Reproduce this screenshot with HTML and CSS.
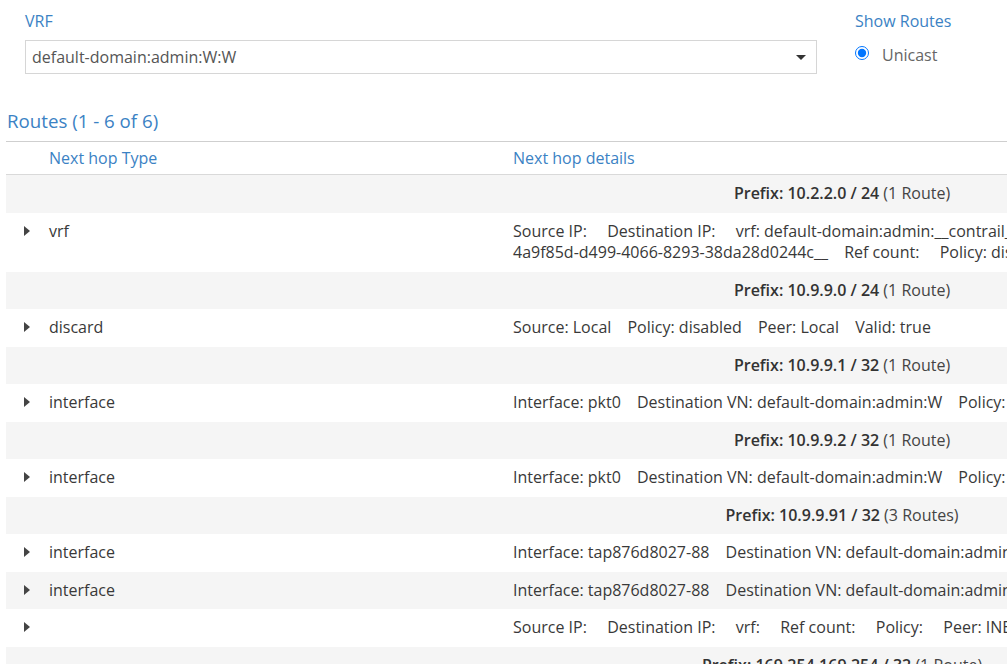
FILE: index.html
```html
<!DOCTYPE html>
<html>
<head>
<meta charset="utf-8">
<link rel="stylesheet" href="styles.css">
</head>
<body>
<div class="page">
  <div class="filters">
    <div class="field vrf">
      <div class="label">VRF</div>
      <div class="select">
        <span class="select-text">default-domain:admin:W:W</span>
        <span class="select-caret"></span>
      </div>
    </div>
    <div class="field show">
      <div class="label">Show Routes</div>
      <label class="radio"><input type="radio" checked><span>Unicast</span></label>
    </div>
  </div>

  <div class="routes">
    <div class="routes-title">Routes (1 - 6 of 6)</div>
    <div class="grid-wrap">
      <table class="grid">
        <colgroup><col class="c-caret"><col class="c-type"><col class="c-details"></colgroup>
        <thead>
          <tr><th></th><th>Next hop Type</th><th>Next hop details</th></tr>
        </thead>
        <tbody>
          <tr class="group"><td colspan="3"><b>Prefix: 10.2.2.0 / 24</b> (1 Route)</td></tr>
          <tr><td class="caret-cell"><span class="caret"></span></td><td>vrf</td>
            <td><span class="kv">Source IP:&nbsp;</span> <span class="kv">Destination IP:&nbsp;</span> <span class="kv">vrf: default-domain:admin:__contrail_lr_internal_vn_</span><br><span class="kv">4a9f85d-d499-4066-8293-38da28d0244c__</span> <span class="kv">Ref count:&nbsp;</span> <span class="kv">Policy: disabled</span> <span class="kv">Peer: Local</span></td></tr>
          <tr class="group"><td colspan="3"><b>Prefix: 10.9.9.0 / 24</b> (1 Route)</td></tr>
          <tr><td class="caret-cell"><span class="caret"></span></td><td>discard</td>
            <td><span class="kv">Source: Local</span> <span class="kv">Policy: disabled</span> <span class="kv">Peer: Local</span> <span class="kv">Valid: true</span></td></tr>
          <tr class="group"><td colspan="3"><b>Prefix: 10.9.9.1 / 32</b> (1 Route)</td></tr>
          <tr><td class="caret-cell"><span class="caret"></span></td><td>interface</td>
            <td><span class="kv">Interface: pkt0</span> <span class="kv">Destination VN: default-domain:admin:W</span> <span class="kv">Policy: disabled</span></td></tr>
          <tr class="group"><td colspan="3"><b>Prefix: 10.9.9.2 / 32</b> (1 Route)</td></tr>
          <tr><td class="caret-cell"><span class="caret"></span></td><td>interface</td>
            <td><span class="kv">Interface: pkt0</span> <span class="kv">Destination VN: default-domain:admin:W</span> <span class="kv">Policy: disabled</span></td></tr>
          <tr class="group"><td colspan="3"><b>Prefix: 10.9.9.91 / 32</b> (3 Routes)</td></tr>
          <tr><td class="caret-cell"><span class="caret"></span></td><td>interface</td>
            <td><span class="kv">Interface: tap876d8027-88</span> <span class="kv">Destination VN: default-domain:admin:W</span></td></tr>
          <tr><td class="caret-cell"><span class="caret"></span></td><td>interface</td>
            <td><span class="kv">Interface: tap876d8027-88</span> <span class="kv">Destination VN: default-domain:admin:W</span></td></tr>
          <tr><td class="caret-cell"><span class="caret"></span></td><td></td>
            <td><span class="kv">Source IP:&nbsp;</span> <span class="kv">Destination IP:&nbsp;</span> <span class="kv">vrf:&nbsp;</span> <span class="kv">Ref count:&nbsp;</span> <span class="kv">Policy:&nbsp;</span> <span class="kv">Peer: INET</span></td></tr>
          <tr class="group"><td colspan="3"><b>Prefix: 169.254.169.254 / 32</b> (1 Route)</td></tr>
          <tr><td class="caret-cell"><span class="caret"></span></td><td>interface</td>
            <td><span class="kv">Interface: vhost0</span></td></tr>
        </tbody>
      </table>
    </div>
  </div>
</div>
</body>
</html>
```
FILE: styles.css
```css
html, body {
  margin: 0;
  padding: 0;
  background: #fff;
  overflow: hidden;
}
body {
  font-family: "Open Sans", "Liberation Sans", sans-serif;
  font-size: 16px;
  color: #393939;
}
.page {
  width: 1007px;
  height: 664px;
  overflow: hidden;
}
.filters {
  display: flex;
  padding: 10px 0 0 25px;
  gap: 38px;
}
.field .label {
  color: #3b82c4;
  line-height: 22px;
  height: 30px;
}
.vrf {
  width: 792px;
  flex: none;
}
.select {
  box-sizing: border-box;
  height: 34px;
  border: 1px solid #d6d6d6;
  display: flex;
  align-items: center;
  justify-content: space-between;
  padding: 0 10px 0 6px;
}
.select-text {
  color: #555;
  line-height: 20px;
}
.select-caret {
  width: 0;
  height: 0;
  border-left: 5px solid transparent;
  border-right: 5px solid transparent;
  border-top: 5px solid #333;
  margin-top: 1px;
}
.radio {
  display: flex;
  align-items: center;
  height: 30px;
  color: #666;
  gap: 13px;
}
.radio input {
  margin: 0;
  width: 14px;
  height: 14px;
  position: relative;
  top: -2px;
}
.routes {
  padding: 34px 0 0 6px;
}
.routes-title {
  color: #3b82c4;
  font-size: 18.7px;
  line-height: 25px;
  padding-left: 1px;
  padding-bottom: 8px;
  width: 1001px;
  border-bottom: 1px solid #cfcfcf;
}
.grid-wrap {
  width: 1001px;
  overflow: hidden;
}
.grid {
  width: 1672px;
  border-collapse: collapse;
  table-layout: fixed;
}
.c-caret { width: 35px; }
.c-type { width: 464px; }
.grid th {
  font-weight: normal;
  color: #3b82c4;
  text-align: left;
  padding: 6px 8px 5px;
  line-height: 21px;
  border-bottom: 1px solid #d9d9d9;
}
.grid td {
  padding: 8px 8px;
  line-height: 21.5px;
  vertical-align: top;
  white-space: nowrap;
}
.grid tbody tr:nth-child(odd) {
  background: #f5f5f5;
}
.grid tr.group td {
  text-align: center;
  color: #444;
}
.grid tr.group b {
  font-weight: 600;
  color: #333;
}
.caret {
  display: block;
  width: 0;
  height: 0;
  border-top: 5px solid transparent;
  border-bottom: 5px solid transparent;
  border-left: 6px solid #444;
  margin: 5px 0 0 10px;
}
.kv {
  margin-right: 12px;
}
```
